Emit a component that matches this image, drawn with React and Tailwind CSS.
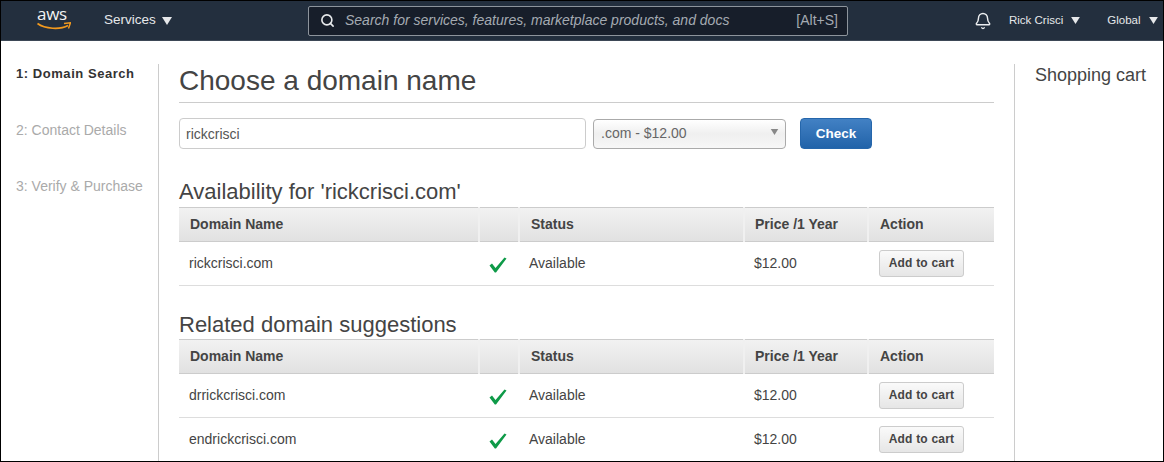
import { Search, Bell } from 'lucide-react';

const FONT = "font-['Liberation_Sans',Arial,sans-serif]";

function Caret({ className }) {
  return (
    <svg viewBox="0 0 10 8" className={className}>
      <path d="M0 0h10L5 8z" fill="currentColor" />
    </svg>
  );
}

function Check() {
  return (
    <svg viewBox="0 0 18 16" className="w-[18px] h-[16px] ml-[10px] mt-[3px] block">
      <path d="M0.5 8.5L3 6.5L6.5 11L15.5 0.5L17.5 1.5L7 15.5H5.8z" fill="#0e9a48" />
    </svg>
  );
}

function TopBar() {
  return (
    <div className="h-[40px] shrink-0 bg-[#232f3e] border-b border-[#3d4856] flex items-center text-[#e6e8ea] text-[12px]">
      <div className="w-[103px] pl-[36px] relative h-full">
        <div className="text-[#f2f3f4] text-[17px] leading-none font-['Open_Sans',sans-serif] tracking-[-0.3px] pt-[4px]">aws</div>
        <svg viewBox="0 0 34 10" className="absolute left-[36px] top-[21px] w-[34px] h-[10px]">
          <path d="M0.5 1.5C8 7 23 8 31 3.5" fill="none" stroke="#f39a1e" strokeWidth="1.6" />
          <path d="M27 1.5L33.5 0.8L31.5 6.5" fill="none" stroke="#f39a1e" strokeWidth="1.4" />
        </svg>
      </div>
      <div className="flex items-center w-[204px] text-[13.5px]">
        Services
        <Caret className="w-[10px] h-[8px] ml-[6px] mt-[1px] text-[#e6e8ea]" />
      </div>
      <div className="w-[540px] h-[30px] border border-[#8d949c] rounded-[2px] bg-[#171e2a] flex items-center pl-[11px] pr-[9px] text-[#a5abb2] text-[14px]">
        <Search size={15} strokeWidth={2.6} className="text-[#e8eaec] shrink-0" />
        <span className="italic ml-[10px] flex-1 whitespace-nowrap">Search for services, features, marketplace products, and docs</span>
        <span>[Alt+S]</span>
      </div>
      <Bell size={18} strokeWidth={1.9} className="ml-[126px] text-[#eceef0]" />
      <span className="ml-[17px] whitespace-nowrap text-[11.5px]">Rick Crisci</span>
      <Caret className="w-[9px] h-[7px] ml-[8px] text-[#e6e8ea]" />
      <span className="ml-[27px] text-[11.5px]">Global</span>
      <Caret className="w-[9px] h-[7px] ml-[8px] text-[#e6e8ea]" />
    </div>
  );
}

function Steps() {
  return (
    <div className="w-[158px] shrink-0 border-r border-[#cccccc] text-[14px] pl-[15px] pt-[2px] leading-[16px] text-[#aaaaaa] whitespace-nowrap">
      <div className="font-bold text-[#333333] tracking-[0.55px] text-[13px]">1: Domain Search</div>
      <div className="mt-[40px]">2: Contact Details</div>
      <div className="mt-[40px]">3: Verify &amp; Purchase</div>
    </div>
  );
}

function Th({ children, last, wide }) {
  return (
    <th className={`text-left font-bold text-[#444444] text-[14px] border-t border-b border-[#cccccc] ${wide ? 'pl-[11px]' : 'pl-[10px]'} ${last ? '' : 'border-r-2 border-r-[#f0f0f0]'}`}>
      {children}
    </th>
  );
}

function DomainRow({ name, last }) {
  return (
    <tr className={`h-[44px] text-[14px] text-[#444444] ${last ? '' : 'border-b border-[#dddddd]'}`}>
      <td className="pl-[10px]">{name}</td>
      <td><Check /></td>
      <td className="pl-[10px]">Available</td>
      <td className="pl-[10px]">$12.00</td>
      <td className="pl-[11px]">
        <button className="w-[85px] h-[27px] pb-[2px] border border-[#cccccc] rounded-[3px] bg-gradient-to-b from-[#fafafa] to-[#e6e6e6] font-bold text-[12px] text-[#444444] tracking-[0.2px]">
          Add to cart
        </button>
      </td>
    </tr>
  );
}

function DomainTable({ names }) {
  return (
    <table className="w-[815px] table-fixed border-collapse">
      <colgroup>
        <col className="w-[300px]" />
        <col className="w-[40px]" />
        <col className="w-[225px]" />
        <col className="w-[124px]" />
        <col className="w-[126px]" />
      </colgroup>
      <thead>
        <tr className="h-[34px] bg-gradient-to-b from-[#f2f2f2] to-[#e1e1e1]">
          <Th wide>Domain Name</Th>
          <Th />
          <Th wide>Status</Th>
          <Th>Price /1 Year</Th>
          <Th last wide>Action</Th>
        </tr>
      </thead>
      <tbody>
        {names.map((n, i) => (
          <DomainRow key={n} name={n} last={i === names.length - 1 && names.length > 1} />
        ))}
      </tbody>
    </table>
  );
}

export default function App() {
  return (
    <div className={`${FONT} w-[1164px] h-[462px] border border-black overflow-hidden flex flex-col bg-white`}>
      <TopBar />
      <div className="flex-1 flex pt-[23px] min-h-0">
        <Steps />
        <div className="w-[815px] ml-[20px] shrink-0">
          <h1 className="text-[28px] leading-[34px] text-[#444444] h-[39px] border-b border-[#cccccc]">Choose a domain name</h1>
          <div className="flex items-center mt-[15px]">
            <input
              readOnly
              value="rickcrisci"
              className="w-[407px] h-[31px] border border-[#cccccc] rounded-[4px] px-[6px] text-[14px] text-[#555555] outline-none"
            />
            <div className="w-[193px] h-[30px] ml-[7px] border border-[#aaaaaa] rounded-[4px] bg-gradient-to-b from-white via-[#efefef] to-[#f7f7f7] flex items-center justify-between pl-[7px] pr-[6px] text-[14px] text-[#666666]">
              .com - $12.00
              <Caret className="w-[9px] h-[6px] text-[#888888] mb-[4px]" />
            </div>
            <button className="w-[72px] h-[31px] pt-[1px] ml-[14px] rounded-[4px] border border-[#2566ab] bg-gradient-to-b from-[#4281c4] to-[#2163a9] text-white font-bold text-[13.5px]">
              Check
            </button>
          </div>
          <h2 className="text-[22px] leading-[26px] text-[#444444] mt-[30px] mb-[2px]">Availability for 'rickcrisci.com'</h2>
          <DomainTable names={['rickcrisci.com']} />
          <h2 className="text-[22px] leading-[26px] text-[#444444] mt-[26px] mb-[1px]">Related domain suggestions</h2>
          <DomainTable names={['drrickcrisci.com', 'endrickcrisci.com']} />
        </div>
        <div className="ml-[20px] flex-1 border-l border-[#cccccc] pl-[20px] pt-[1px]">
          <div className="text-[18px] leading-[20px] text-[#444444] whitespace-nowrap">Shopping cart</div>
        </div>
      </div>
    </div>
  );
}
